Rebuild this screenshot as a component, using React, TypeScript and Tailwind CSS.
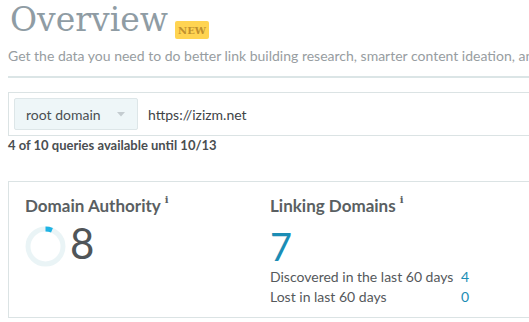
import React from "react";

const lato = { fontFamily: "Lato, 'Open Sans', sans-serif" };

function Donut() {
  const r = 17.5;
  const c = 2 * Math.PI * r;
  const frac = 0.06;
  return (
    <svg width="41" height="41" viewBox="0 0 41 41">
      <circle cx="20.5" cy="20.5" r={r} fill="none" stroke="#eaf4f6" strokeWidth="5" />
      <circle
        cx="20.5"
        cy="20.5"
        r={r}
        fill="none"
        stroke="#1fb3e4"
        strokeWidth="5"
        strokeDasharray={`${c * frac} ${c}`}
        transform="rotate(-90 20.5 20.5)"
      />
    </svg>
  );
}

export default function App() {
  return (
    <div className="w-[529px] h-[322px] overflow-hidden bg-white pl-2" style={lato}>
      <div className="flex items-end pt-[1px]">
        <h1
          className="text-[33px] leading-[38px] text-[#8f9ca4] pl-[2px]"
          style={{ fontFamily: "'DejaVu Serif', serif", fontWeight: 400 }}
        >
          Overview
        </h1>
        <span
          className="ml-[7px] mb-[0px] h-[18px] w-[34px] rounded-[2px] bg-[#ffd452] text-[#bf9030] text-[10px] font-bold flex items-center justify-center"
          style={{ fontFamily: "'DejaVu Serif', serif" }}
        >
          NEW
        </span>
      </div>
      <p className="mt-[8px] text-[14px] leading-[18px] text-[#979da1] whitespace-nowrap">
        Get the data you need to do better link building research, smarter content ideation, and more.
      </p>
      <div className="mt-[11px] h-[2px] w-[600px] bg-[#dbe5e6]" />
      <div className="mt-[14px] w-[600px] h-[44px] border border-[#dbe3e4] flex items-center pl-[5px]">
        <div className="w-[124px] h-[32px] bg-[#eef6f8] border border-[#dde6e8] rounded-[2px] flex items-center pl-[11px] text-[14px] text-[#4a4f52]">
          <span>root domain</span>
          <svg width="8" height="5" viewBox="0 0 8 5" className="ml-[16px]">
            <polygon points="0,0 8,0 4,4.5" fill="#c4ccd0" />
          </svg>
        </div>
        <span className="ml-[10px] text-[14px] text-[#3e4346]">https://izizm.net</span>
      </div>
      <p className="mt-[1px] text-[13px] leading-[16px] font-bold text-[#4a4e51]">
        4 of 10 queries available until 10/13
      </p>
      <div className="mt-[28px] w-[600px] h-[137px] border border-[#dbe3e4] flex">
        <div className="w-[245px] pl-[16px] pt-[13px]">
          <div className="flex items-start text-[17px] leading-[22px] font-bold text-[#5a5f62]">
            Domain Authority
            <span className="ml-[4px] text-[10px] leading-[10px] font-bold text-[#5a5f62]" style={{ fontFamily: "'DejaVu Serif', serif" }}>i</span>
          </div>
          <div className="flex items-start mt-[9px]">
            <Donut />
            <span className="ml-[4px] -mt-[5px] text-[42px] leading-[44px] text-[#505558]">8</span>
          </div>
        </div>
        <div className="pl-[16px] pt-[13px]">
          <div className="flex items-start text-[17px] leading-[22px] font-bold text-[#5a5f62]">
            Linking Domains
            <span className="ml-[4px] text-[10px] leading-[10px] font-bold text-[#5a5f62]" style={{ fontFamily: "'DejaVu Serif', serif" }}>i</span>
          </div>
          <div className="mt-[9px] text-[38px] leading-[40px] text-[#1b8db5]">7</div>
          <div className="mt-[1px] text-[14px] leading-[20px] text-[#55595c]">
            <div className="flex">
              <span className="w-[191px]">Discovered in the last 60 days</span>
              <span className="text-[#1b8db5]">4</span>
            </div>
            <div className="flex">
              <span className="w-[191px]">Lost in last 60 days</span>
              <span className="text-[#1b8db5]">0</span>
            </div>
          </div>
        </div>
      </div>
    </div>
  );
}
